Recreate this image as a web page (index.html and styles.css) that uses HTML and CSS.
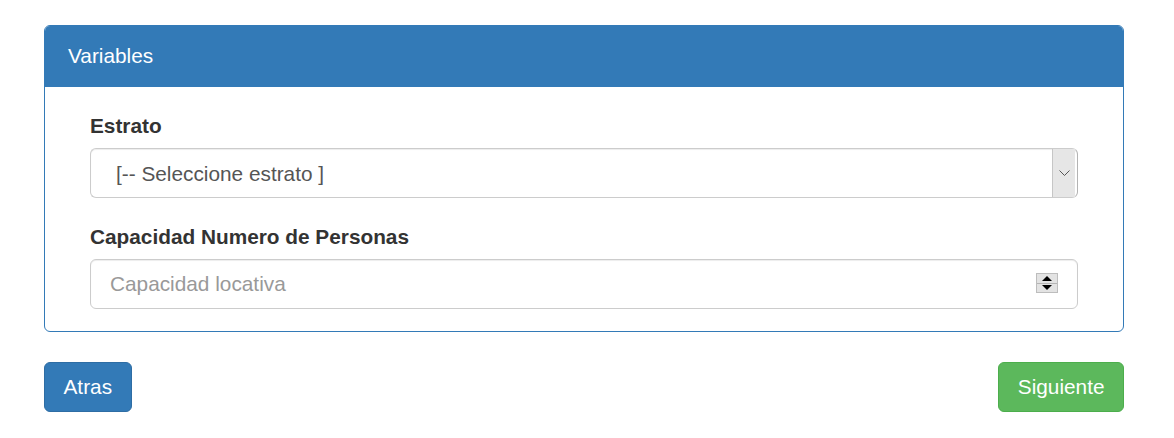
FILE: index.html
```html
<!DOCTYPE html>
<html lang="es">
<head>
    <meta charset="UTF-8">
    <meta name="viewport" content="width=device-width, initial-scale=1.0">
    <title>Variables</title>
    <link rel="stylesheet" href="styles.css">
</head>
<body>
    <div class="page">
        <div class="panel">
            <div class="panel-heading">Variables</div>
            <div class="panel-body">
                <div class="form-group">
                    <label for="estrato">Estrato</label>
                    <div class="field-wrap">
                        <select id="estrato" class="form-control select-control">
                            <option>[-- Seleccione estrato ]</option>
                        </select>
                        <span class="select-arrow">
                            <svg width="11" height="7" viewBox="0 0 11 7">
                                <polyline points="0.5,0.5 5.5,5.5 10.5,0.5" fill="none" stroke="#555" stroke-width="1"/>
                            </svg>
                        </span>
                    </div>
                </div>
                <div class="form-group last">
                    <label for="capacidad">Capacidad Numero de Personas</label>
                    <div class="field-wrap">
                        <input type="number" id="capacidad" class="form-control" placeholder="Capacidad locativa">
                        <span class="spinner">
                            <span class="spin-btn">
                                <svg width="10" height="5" viewBox="0 0 10 5"><polygon points="5,0 10,5 0,5" fill="#000"/></svg>
                            </span>
                            <span class="spin-btn">
                                <svg width="10" height="5" viewBox="0 0 10 5"><polygon points="0,0 10,0 5,5" fill="#000"/></svg>
                            </span>
                        </span>
                    </div>
                </div>
            </div>
        </div>
        <div class="actions">
            <button type="button" class="btn btn-primary">Atras</button>
            <button type="button" class="btn btn-success">Siguiente</button>
        </div>
    </div>
</body>
</html>
```

FILE: styles.css
```css
body, html {
    margin: 0;
    background-color: #fff;
    font-family: "Liberation Sans", Arial, sans-serif;
    font-size: 20.8px;
    color: #333;
}
.page {
    padding: 25px 50px 0 44px;
}
.panel {
    border: 1px solid #337ab7;
    border-radius: 6px;
    background-color: #fff;
}
.panel-heading {
    background-color: #337ab7;
    color: #fff;
    padding: 15px 23px;
    line-height: 30px;
    border-bottom: 1px solid #337ab7;
    border-radius: 5px 5px 0 0;
}
.panel-body {
    padding: 24px 45px 22px;
}
.form-group {
    margin-bottom: 24px;
}
.form-group.last {
    margin-bottom: 0;
}
.form-group label {
    display: block;
    font-weight: bold;
    line-height: 30px;
    margin-bottom: 7px;
}
.field-wrap {
    position: relative;
}
.form-control {
    display: block;
    width: 100%;
    height: 50px;
    box-sizing: border-box;
    padding: 0 19px;
    font-family: inherit;
    font-size: 20.8px;
    color: #555;
    background-color: #fff;
    border: 1px solid #ccc;
    border-radius: 6px;
    box-shadow: inset 0 1px 1px rgba(0,0,0,0.075);
    outline: none;
    margin: 0;
}
.form-control::placeholder {
    color: #999;
}
.form-control::-webkit-inner-spin-button,
.form-control::-webkit-outer-spin-button {
    -webkit-appearance: none;
    margin: 0;
}
.select-control {
    -webkit-appearance: none;
    appearance: none;
    padding-left: 25px;
    border-right-color: #b3b3b3;
}
.select-arrow {
    position: absolute;
    top: 1px;
    bottom: 1px;
    right: 3px;
    width: 22px;
    border-left: 1px solid #c6c6c6;
    background-color: #e6e6e6;
    display: flex;
    align-items: center;
    justify-content: center;
    pointer-events: none;
}
.spinner {
    position: absolute;
    top: 14px;
    right: 20px;
    width: 22px;
    height: 20px;
    display: flex;
    flex-direction: column;
    border: 1px solid #bdbdbd;
    box-sizing: border-box;
    background-color: #e3e3e3;
}
.spin-btn {
    flex: 1;
    display: flex;
    align-items: center;
    justify-content: center;
}
.spin-btn + .spin-btn {
    border-top: 1px solid #b5b5b5;
}
.actions {
    display: flex;
    justify-content: space-between;
    margin-top: 30px;
}
.btn {
    height: 50px;
    padding: 0 18.5px;
    font-family: inherit;
    font-size: 20.8px;
    color: #fff;
    border: 1px solid transparent;
    border-radius: 6px;
    cursor: pointer;
}
.btn-primary {
    background-color: #337ab7;
    border-color: #2e6da4;
}
.btn-success {
    background-color: #5cb85c;
    border-color: #4cae4c;
}
```
